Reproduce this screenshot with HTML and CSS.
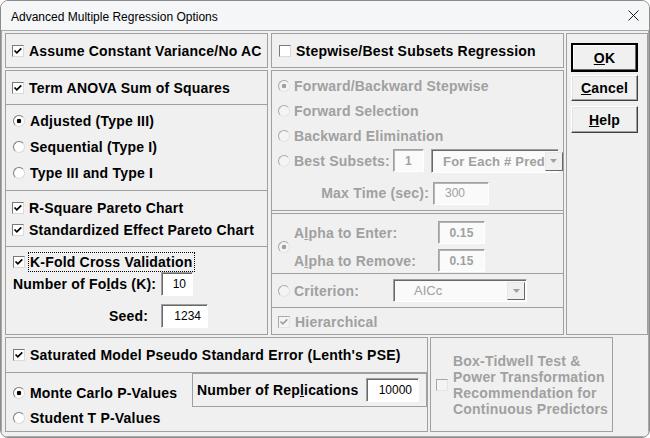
FILE: index.html
```html
<!DOCTYPE html>
<html lang="en">
<head>
    <meta charset="UTF-8">
    <meta name="viewport" content="width=device-width, initial-scale=1.0">
    <title>Advanced Multiple Regression Options</title>
    <link rel="stylesheet" href="styles.css">
</head>
<body>
<div class="window">
    <div class="titlebar">
        <span class="title">Advanced Multiple Regression Options</span>
        <svg class="close" width="11" height="11" viewBox="0 0 11 11"><path d="M0.5 0.5L10.5 10.5M10.5 0.5L0.5 10.5"/></svg>
    </div>

    <div class="client">
        <div class="top">
            <!-- left column -->
            <div class="col col-left">
                <div class="frame head">
                    <div class="opt"><span class="cb"><svg viewBox="0 0 10 10"><path d="M1.5 4.5L3.8 6.8L8.3 2.3"/></svg></span>Assume Constant Variance/No AC</div>
                </div>
                <div class="frame panel">
                    <div class="sec anova">
                        <div class="opt"><span class="cb"><svg viewBox="0 0 10 10"><path d="M1.5 4.5L3.8 6.8L8.3 2.3"/></svg></span>Term ANOVA Sum of Squares</div>
                    </div>
                    <div class="sec types">
                        <div class="row r26 opt"><span class="rb on"></span>Adjusted (Type III)</div>
                        <div class="row r26 opt"><span class="rb"></span>Sequential (Type I)</div>
                        <div class="row r26 opt"><span class="rb"></span>Type III and Type I</div>
                    </div>
                    <div class="sec pareto">
                        <div class="row r22 opt"><span class="cb"><svg viewBox="0 0 10 10"><path d="M1.5 4.5L3.8 6.8L8.3 2.3"/></svg></span>R-Square Pareto Chart</div>
                        <div class="row r22 opt"><span class="cb"><svg viewBox="0 0 10 10"><path d="M1.5 4.5L3.8 6.8L8.3 2.3"/></svg></span>Standardized Effect Pareto Chart</div>
                    </div>
                    <div class="sec kfold">
                        <div class="row kf-row opt"><span class="cb"><svg viewBox="0 0 10 10"><path d="M1.5 4.5L3.8 6.8L8.3 2.3"/></svg></span><span class="focus">K-Fold Cross Validation</span></div>
                        <div class="kgrid">
                            <span class="lbl">Number of Fo<u>l</u>ds (K):</span>
                            <span class="field w32">10</span>
                            <span class="lbl seed">Seed:</span>
                            <span class="field w47">1234</span>
                        </div>
                    </div>
                </div>
            </div>

            <!-- right column -->
            <div class="col col-right">
                <div class="frame head">
                    <div class="opt"><span class="cb"></span>Stepwise/Best Subsets Regression</div>
                </div>
                <div class="frame panel dis">
                    <div class="steps">
                        <div class="row r25 opt"><span class="rb on"></span>Forward/Backward Stepwise</div>
                        <div class="row r25 opt"><span class="rb"></span>Forward Selection</div>
                        <div class="row r25 opt"><span class="rb"></span>Backward Elimination</div>
                        <div class="row r25 opt">
                            <span class="rb"></span><span class="lbl-best">Best Subsets:</span>
                            <span class="field w31 center">1</span>
                            <span class="combo w128"><span class="txt">For Each # Pred</span><span class="arr"><svg width="7" height="4" viewBox="0 0 7 4"><path d="M0 0H7L3.5 4Z"/></svg></span></span>
                        </div>
                        <div class="row max-row">
                            <span class="lbl-max">Max Time (sec):</span>
                            <span class="field w56 left">300</span>
                        </div>
                    </div>
                    <div class="alpha">
                        <span class="rb on alpha-rb"></span>
                        <div class="agrid">
                            <span>A<u>l</u>pha to Enter:</span>
                            <span class="field w47 center">0.15</span>
                            <span>A<u>l</u>pha to Remove:</span>
                            <span class="field w47 center">0.15</span>
                        </div>
                    </div>
                    <div class="crit">
                        <span class="rb"></span><span class="lbl-best">Criterion:</span>
                        <span class="combo w134 crit-combo"><span class="txt">AICc</span><span class="arr"><svg width="7" height="4" viewBox="0 0 7 4"><path d="M0 0H7L3.5 4Z"/></svg></span></span>
                    </div>
                    <div class="hier">
                        <div class="opt"><span class="cb"><svg viewBox="0 0 10 10"><path d="M1.5 4.5L3.8 6.8L8.3 2.3"/></svg></span>Hierarchical</div>
                    </div>
                </div>
            </div>

            <!-- buttons -->
            <div class="frame buttons">
                <div class="btn btn-ok"><u>O</u>K</div>
                <div class="btn btn-cancel"><u>C</u>ancel</div>
                <div class="btn btn-help"><u>H</u>elp</div>
            </div>
        </div>

        <div class="bottom">
            <div class="frame pse">
                <div class="pse-head">
                    <div class="opt"><span class="cb"><svg viewBox="0 0 10 10"><path d="M1.5 4.5L3.8 6.8L8.3 2.3"/></svg></span>Saturated Model Pseudo Standard Error (Lenth's PSE)</div>
                </div>
                <div class="pse-body">
                    <div class="pvals">
                        <div class="row r25 opt"><span class="rb on"></span>Monte Carlo P-Values</div>
                        <div class="row r25 opt"><span class="rb"></span>Student T P-Values</div>
                    </div>
                    <div class="reps">
                        <span class="lbl-reps">Number of Rep<u>l</u>ications</span>
                        <span class="field w53">10000</span>
                    </div>
                </div>
            </div>
            <div class="frame boxtid dis">
                <span class="cb"></span>
                <div class="boxtid-text">Box-Tidwell Test &amp;<br>Power Transformation<br>Recommendation for<br>Continuous Predictors</div>
            </div>
        </div>
    </div>
</div>
</body>
</html>
```

FILE: styles.css
```css
* {
    box-sizing: border-box;
}
body {
    margin: 0;
    font-family: 'Liberation Sans', Arial, sans-serif;
    color: #000;
}
.window {
    width: 650px;
    height: 438px;
    border: 1px solid #8c8c8c;
    border-radius: 8px;
    overflow: hidden;
    background: #f0f0f0;
    display: flex;
    flex-direction: column;
}
.titlebar {
    height: 29px;
    flex: none;
    background: #f5f6f8;
    display: flex;
    align-items: center;
    justify-content: space-between;
    padding: 0 10px 0 10px;
}
.title {
    font-size: 12px;
    padding-top: 2px;
}
.close path {
    stroke: #1a1a1a;
    stroke-width: 1;
}
.client {
    flex: 1;
    border: 1px solid #a8a8a8;
    padding: 2px 0 4px 3px;
    display: flex;
    flex-direction: column;
    gap: 2px;
}
.top {
    display: flex;
    height: 302px;
}
.col {
    display: flex;
    flex-direction: column;
    gap: 2px;
}
.col-left {
    width: 263px;
    margin-right: 3px;
}
.col-right {
    width: 293px;
    margin-right: 2px;
}
.frame {
    border: 1px solid #a0a0a0;
}
.head {
    height: 35px;
    display: flex;
    align-items: center;
    padding-left: 6px;
}
.col-right .head {
    padding-left: 7px;
}
.panel {
    flex: 1;
    display: flex;
    flex-direction: column;
}
.sec + .sec {
    border-top: 1px solid #a0a0a0;
}

/* text + controls */
.opt, .lbl, .lbl-best, .lbl-max, .lbl-reps, .agrid, .btn, .boxtid-text {
    font-weight: bold;
    font-size: 14px;
    letter-spacing: 0.2px;
}
.opt {
    display: flex;
    align-items: center;
    gap: 5px;
    white-space: nowrap;
}
.row {
    display: flex;
    align-items: center;
}
.r26 { height: 26px; }
.r25 { height: 25px; }
.r22 { height: 22px; }

.cb {
    width: 12px;
    height: 12px;
    flex: none;
    border: 1px solid;
    border-color: #7a7a7a #dadada #dadada #7a7a7a;
    background: #fff;
    display: flex;
    align-items: center;
    justify-content: center;
}
.cb svg {
    width: 10px;
    height: 10px;
    fill: none;
    stroke: #000;
    stroke-width: 1.7;
}
.rb {
    width: 12px;
    height: 12px;
    flex: none;
    border-radius: 50%;
    border: 1px solid;
    border-color: #7a7a7a #dadada #dadada #7a7a7a;
    background: #fff;
}
.rb.on {
    background: radial-gradient(circle, #000 0 2px, #fff 2.6px);
}
.dis .opt, .dis .lbl-best, .dis .lbl-max, .dis .agrid, .dis .boxtid-text {
    color: #a0a0a0;
}
.dis .cb, .dis .rb {
    background: #f4f4f4;
    border-color: #a8a8a8 #e4e4e4 #e4e4e4 #a8a8a8;
}
.dis .cb svg {
    stroke: #a0a0a0;
}
.dis .rb.on {
    background: radial-gradient(circle, #a0a0a0 0 2px, #f4f4f4 2.6px);
}

.field {
    height: 24px;
    flex: none;
    border: 1px solid;
    border-color: #a0a0a0 #fff #fff #a0a0a0;
    box-shadow: inset 1px 1px #696969;
    background: #fff;
    font-size: 12px;
    display: flex;
    align-items: center;
    justify-content: flex-end;
    padding: 0 6px 0 0;
}
.field.center {
    justify-content: center;
    padding: 0;
}
.field.left {
    justify-content: flex-start;
    padding-left: 11px;
}
.dis .field {
    background: #fafafa;
    color: #a0a0a0;
    box-shadow: inset 1px 1px #b4b4b4;
    height: 23px;
}
.w31 { width: 31px; }
.w32 { width: 32px; }
.w47 { width: 47px; }
.w53 { width: 53px; }
.w56 { width: 56px; }
.w128 { width: 128px; }
.w134 { width: 134px; }

.combo {
    height: 24px;
    flex: none;
    display: flex;
    border: 1px solid;
    border-color: #a0a0a0 #fff #fff #a0a0a0;
    box-shadow: inset 1px 1px #696969;
    background: #fafafa;
    padding: 2px 1px 1px 2px;
}
.combo .txt {
    flex: 1;
    color: #a0a0a0;
    font-size: 13px;
    line-height: 19px;
    padding-left: 9px;
    white-space: nowrap;
}
.crit-combo {
    height: 23px;
}
.crit-combo .txt {
    padding-left: 18px;
    line-height: 18px;
}
.combo .arr {
    width: 18px;
    flex: none;
    background: #f0f0f0;
    border: 1px solid;
    border-color: #e8e8e8 #696969 #696969 #e8e8e8;
    display: flex;
    align-items: center;
    justify-content: center;
}
.combo .arr path {
    fill: #a0a0a0;
}

/* left panel */
.anova {
    height: 33px;
    display: flex;
    align-items: center;
    padding-left: 6px;
}
.types {
    height: 86px;
    padding: 3px 0 0 7px;
}
.pareto {
    height: 56px;
    padding: 6px 0 0 6px;
}
.kfold {
    flex: 1;
    padding: 5px 0 0 7px;
}
.kf-row {
    height: 20px;
    gap: 3px;
}
.focus {
    border: 1px dotted #000;
    height: 20px;
    line-height: 18px;
    padding: 0 1px;
}
.kgrid {
    display: grid;
    grid-template-columns: 148px auto;
    row-gap: 8px;
    align-items: center;
    justify-items: start;
}
.lbl.seed {
    justify-self: end;
    padding-right: 13px;
}

/* right panel */
.steps {
    height: 140px;
    border-bottom: 1px solid #a0a0a0;
    padding: 2px 0 0 6px;
}
.steps .opt {
    gap: 4px;
}
.lbl-best {
    width: 95px;
    flex: none;
}
.steps .combo {
    margin-left: 3px;
}
.max-row {
    height: 24px;
    margin-top: 8px;
}
.lbl-max {
    width: 155px;
    text-align: right;
    padding-right: 4px;
}
.alpha {
    height: 60px;
    margin-top: 2px;
    border-top: 1px solid #a0a0a0;
    padding: 6px 0 0 6px;
    display: flex;
    gap: 4px;
}
.alpha-rb {
    margin-top: 21px;
}
.agrid {
    display: grid;
    grid-template-columns: 144px auto;
    row-gap: 3px;
    align-items: center;
}
.crit {
    height: 34px;
    border-top: 1px solid #a0a0a0;
    display: flex;
    align-items: center;
    gap: 4px;
    padding-left: 6px;
}
.crit .lbl-best {
    color: #a0a0a0;
}
.hier {
    flex: 1;
    border-top: 1px solid #a0a0a0;
    display: flex;
    align-items: center;
    padding: 2px 0 0 6px;
}

/* buttons */
.buttons {
    width: 82px;
    padding: 9px 0 0 4px;
    display: flex;
    flex-direction: column;
}
.btn {
    width: 67px;
    height: 26px;
    display: flex;
    align-items: center;
    justify-content: center;
    background: #f0f0f0;
    border: 1px solid;
    border-color: #fff #404040 #404040 #fff;
    box-shadow: inset -1px -1px #a0a0a0, inset 1px 1px #e3e3e3;
}
.btn-ok {
    height: 29px;
    border: 2px solid #000;
    box-shadow: inset -1px -1px #696969, inset 1px 1px #fff;
    margin-bottom: 3px;
}
.btn-cancel {
    margin-bottom: 5px;
}
.btn-help {
    height: 27px;
}

/* bottom */
.bottom {
    display: flex;
    gap: 2px;
    height: 95px;
}
.pse {
    width: 423px;
    display: flex;
    flex-direction: column;
}
.pse-head {
    height: 34px;
    display: flex;
    align-items: center;
    padding-left: 7px;
}
.pse-body {
    flex: 1;
    border-top: 1px solid #a0a0a0;
    display: flex;
}
.pvals {
    width: 186px;
    padding: 7px 0 0 7px;
}
.reps {
    width: 235px;
    height: 34px;
    border: 1px solid #a0a0a0;
    display: flex;
    align-items: center;
    padding-left: 4px;
}
.lbl-reps {
    width: 169px;
    flex: none;
}
.boxtid {
    width: 183px;
    display: flex;
    align-items: center;
    gap: 5px;
    padding-left: 5px;
}
.boxtid-text {
    line-height: 16px;
    white-space: nowrap;
}
```
